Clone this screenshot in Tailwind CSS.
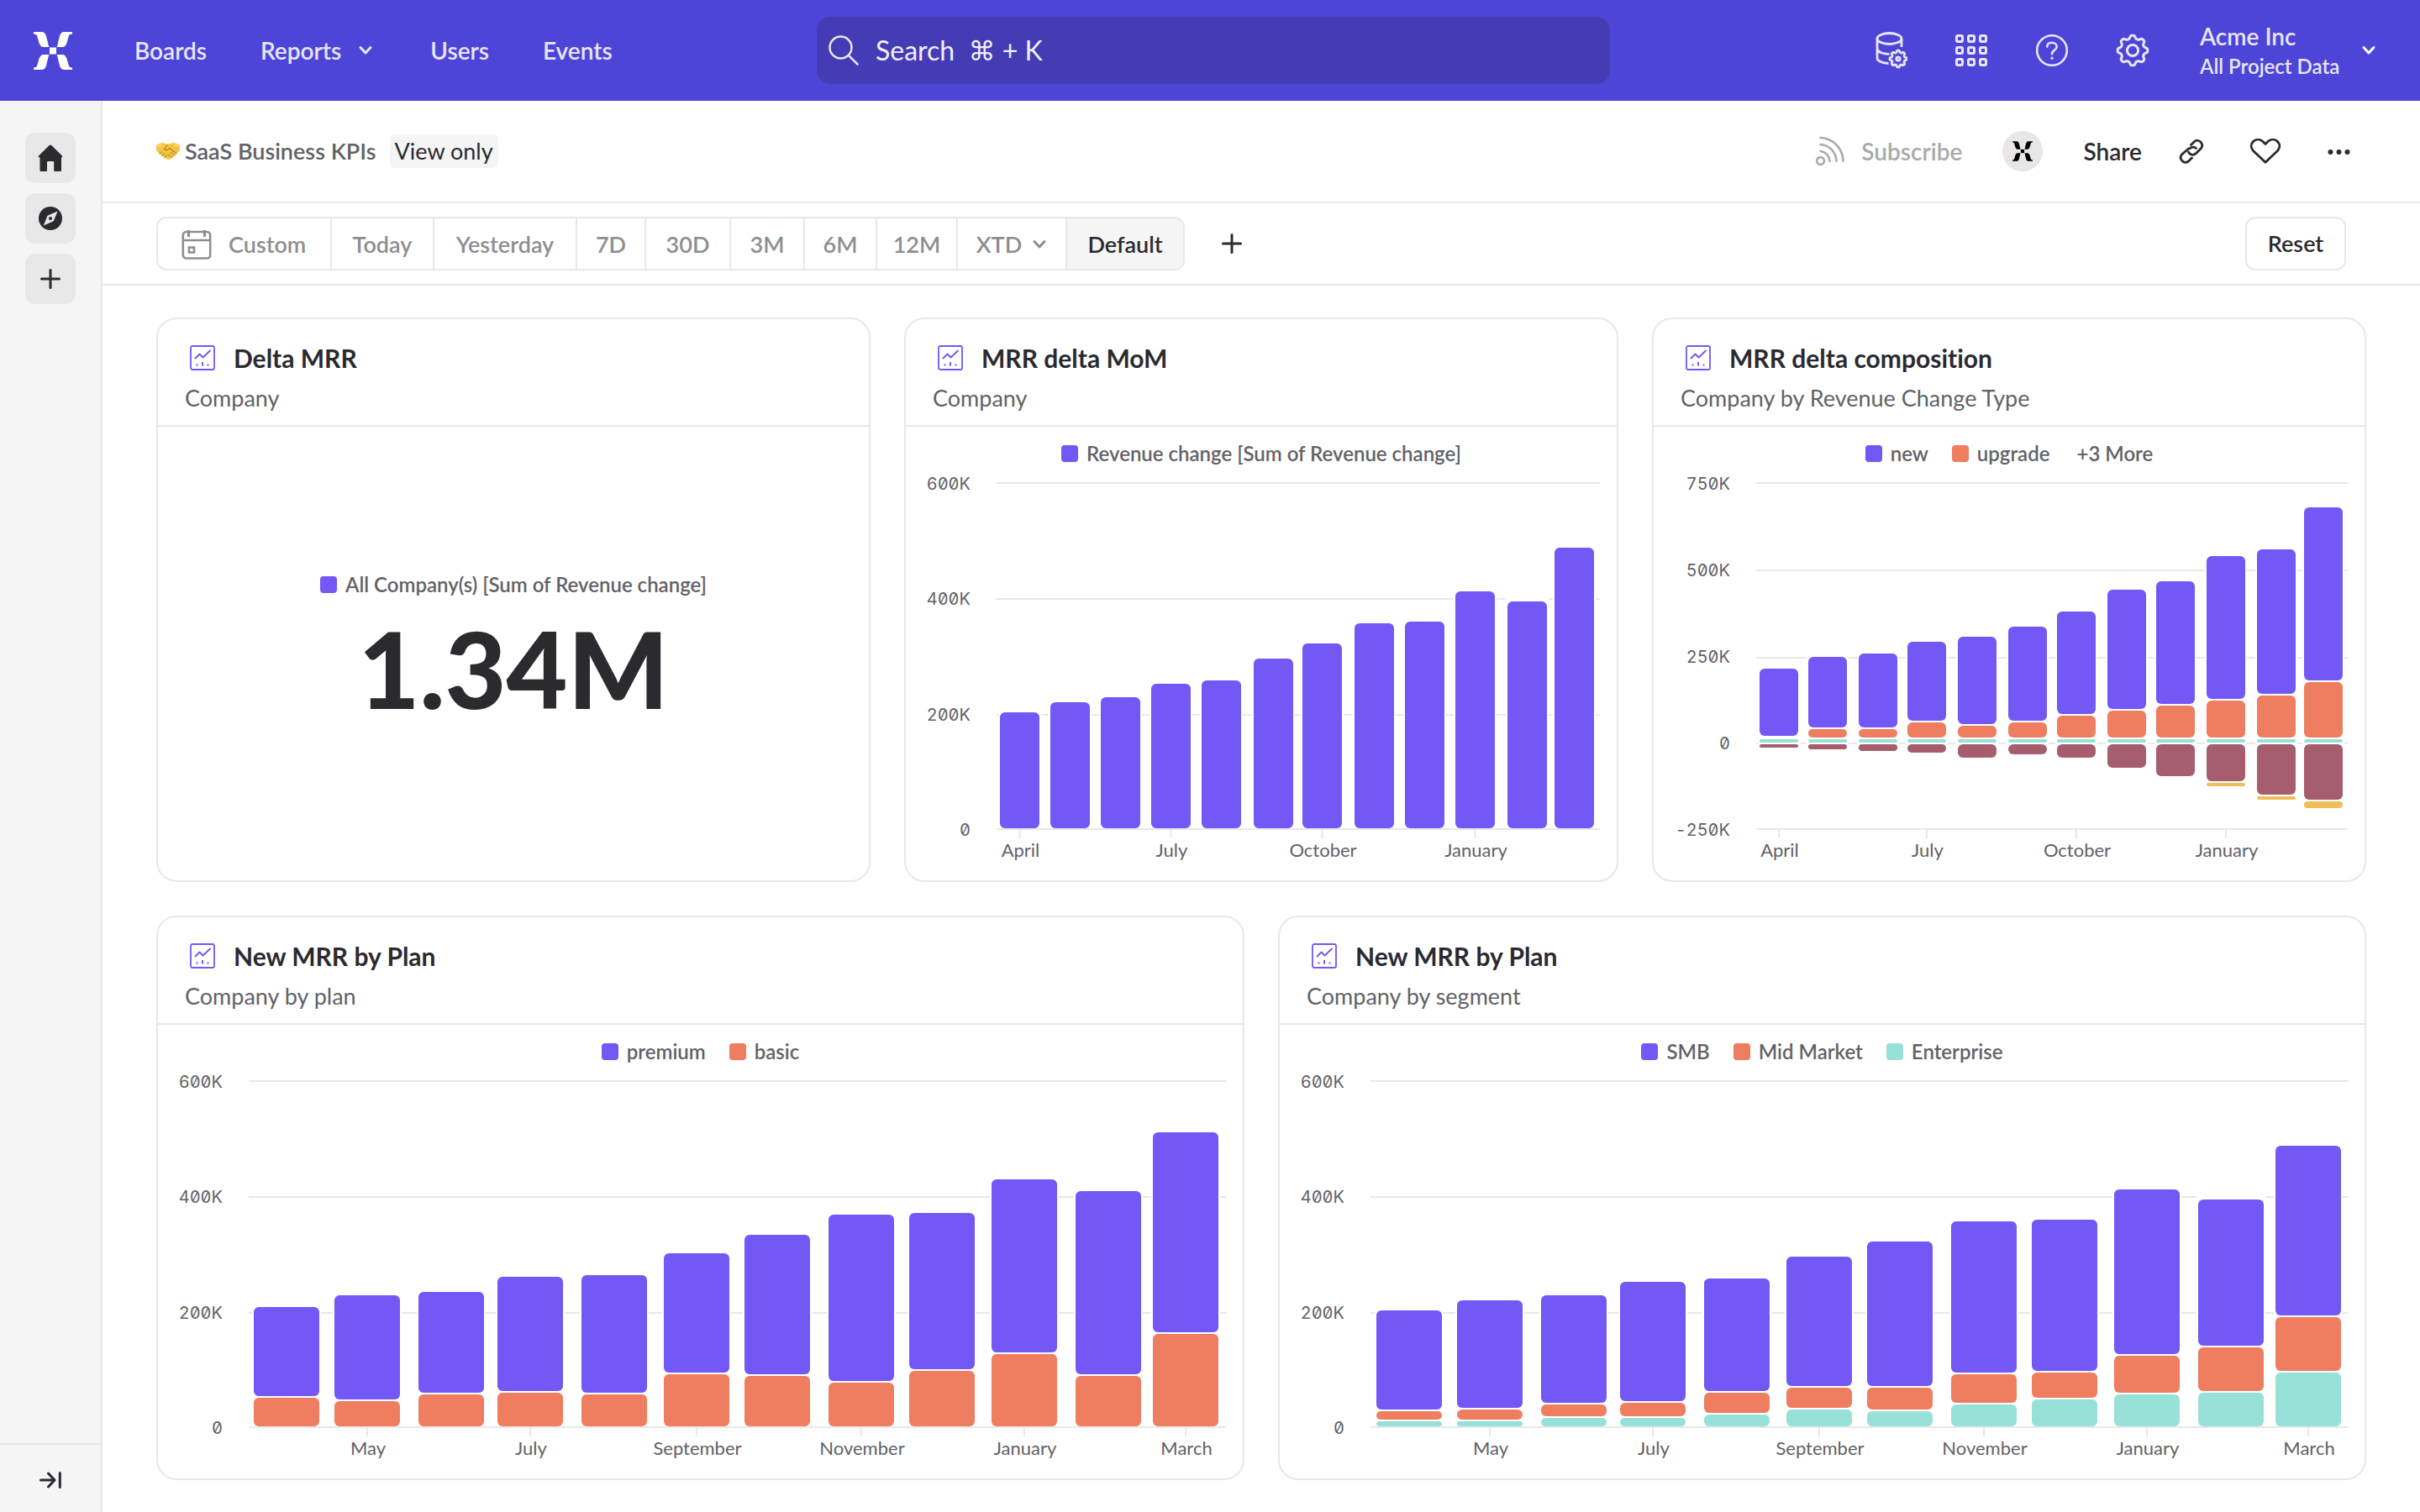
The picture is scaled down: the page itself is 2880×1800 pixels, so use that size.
<!DOCTYPE html>
<html lang="en">
<head>
<meta charset="utf-8">
<title>SaaS Business KPIs</title>
<script src="https://cdn.jsdelivr.net/npm/@tailwindcss/browser@4"></script>
</head>
<body class="flex min-h-screen flex-col bg-white font-['Lato','Open_Sans',sans-serif] text-[27px] leading-9 text-[#2b2a2f] [font-variant-ligatures:none]">

<svg class="hidden" aria-hidden="true">
  <symbol id="logo" viewBox="0 0 46 45">
    <g id="logo-top">
      <path id="logo-arm" d="M0 0H9C12.500 0 14 1.500 15 5L17 13C17.500 15.500 18 17.500 18.500 18H12C9 18 7.500 16 6.500 13L4.500 6C4 3.500 3 2.500 0 2.500Z"/>
      <use href="#logo-arm" transform="translate(46 0) scale(-1 1)"/>
    </g>
    <use href="#logo-top" transform="translate(0 45) scale(1 -1)"/>
    <path d="M19 18.500H27V26.500H19Z"/>
  </symbol>
  <symbol id="chevron" viewBox="0 0 18 12">
    <path d="M3 2.500L9 9L15 2.500" fill="none" stroke="currentColor" stroke-width="3" stroke-linecap="round" stroke-linejoin="round"/>
  </symbol>
  <symbol id="plus" viewBox="0 0 24 24">
    <path d="M12 1.500V22.500M1.500 12H22.500" fill="none" stroke="currentColor" stroke-width="3" stroke-linecap="round"/>
  </symbol>
  <symbol id="report" viewBox="0 0 30 30">
    <rect x="1" y="1" width="28" height="28" rx="2" fill="none" stroke="currentColor" stroke-width="1.800"/>
    <path d="M6.500 15.500L11.500 10.500L15.500 14.500L24 6.500" fill="none" stroke="currentColor" stroke-width="1.900" stroke-linecap="round" stroke-linejoin="round"/>
    <path d="M8.500 22.500V24.500M15 20V24.500M21.500 22.500V24.500" fill="none" stroke="currentColor" stroke-width="2"/>
  </symbol>
</svg>

<header class="flex h-[120px] items-center bg-[#4d45d8] pl-10 pr-8 text-[28px] font-semibold text-[#e8e6f4]">
  <nav class="flex flex-1 items-center">
    <a href="#" aria-label="Home" class="mr-[74px] text-white"><svg class="h-[45px] w-[46px]" fill="currentColor"><use href="#logo"/></svg></a>
    <div class="flex items-center gap-16">
      <a href="#">Boards</a>
      <a href="#" class="flex items-center gap-5 pr-1">Reports <svg class="h-3 w-[18px]"><use href="#chevron"/></svg></a>
      <a href="#">Users</a>
      <a href="#">Events</a>
    </div>
  </nav>
  <label class="flex h-20 w-[944px] items-center gap-5 rounded-2xl bg-[#443cb4] px-3.5">
    <svg class="h-9 w-9" fill="none" stroke="currentColor" stroke-width="2.500" stroke-linecap="round" viewBox="0 0 36 36"><circle cx="14.500" cy="14.500" r="13"/><path d="M24 24L34.500 34.500"/></svg>
    <input type="text" aria-label="Search" placeholder="Search  ⌘ + K" class="flex-1 bg-transparent font-['Lato','DejaVu_Sans',sans-serif] text-[32px] font-normal outline-none placeholder:text-[#f0eff9]">
  </label>
  <div class="flex flex-1 items-center justify-end">
    <div class="flex items-center gap-14">
      <button type="button" aria-label="Data management"><svg class="h-11 w-10" viewBox="-2 0 40 44" fill="none" stroke="currentColor" stroke-width="2.800"><ellipse cx="16.500" cy="8" rx="14.500" ry="6.500"/><path d="M2 8V31C2 34.500 8 37.300 15.500 37.500M31 8V18M2 20.500C3 24 9 26.500 16.500 26.300"/><path data-gear="27 32 10 7.8" stroke-linejoin="round"/><circle cx="27" cy="32" r="2.200"/></svg></button>
      <button type="button" aria-label="Apps"><svg class="h-10 w-10" viewBox="0 0 40 40" fill="none" stroke="currentColor" stroke-width="3"><rect x="2.500" y="2.500" width="7" height="7" rx="1.500"/><rect x="16.500" y="2.500" width="7" height="7" rx="1.500"/><rect x="30.500" y="2.500" width="7" height="7" rx="1.500"/><rect x="2.500" y="16.500" width="7" height="7" rx="1.500"/><rect x="16.500" y="16.500" width="7" height="7" rx="1.500"/><rect x="30.500" y="16.500" width="7" height="7" rx="1.500"/><rect x="2.500" y="30.500" width="7" height="7" rx="1.500"/><rect x="16.500" y="30.500" width="7" height="7" rx="1.500"/><rect x="30.500" y="30.500" width="7" height="7" rx="1.500"/></svg></button>
      <button type="button" aria-label="Help"><svg class="h-10 w-10" viewBox="0 0 40 40" fill="none" stroke="currentColor" stroke-width="2.600" stroke-linecap="round"><circle cx="20" cy="20" r="17.800"/><path d="M14.300 15.500C14.300 12.500 16.700 10.800 20 10.800S25.700 12.800 25.700 15.800C25.700 20 20 19.500 20 24.300"/><circle cx="20" cy="29.200" r="1.600" fill="currentColor" stroke="none"/></svg></button>
      <button type="button" aria-label="Settings"><svg class="h-10 w-10" viewBox="0 0 40 40" fill="none" stroke="currentColor" stroke-width="3"><path data-gear="20 20 17.8 14.2" stroke-linejoin="round"/><circle cx="20" cy="20" r="6.600"/></svg></button>
    </div>
    <button type="button" class="ml-[60px] flex items-center text-left">
      <span class="w-[172px] pt-0.5"><span class="block leading-9">Acme Inc</span><span class="block text-[24px] leading-9">All Project Data</span></span>
      <span class="flex w-[58px] justify-center text-white"><svg class="h-3 w-[18px]"><use href="#chevron"/></svg></span>
    </button>
  </div>
</header>

<div class="flex flex-1">
  <aside class="flex w-[122px] flex-col justify-between border-r-2 border-[#e8e8e8] bg-[#f5f5f5]">
    <div class="flex flex-col items-center gap-3 pt-[38px]">
      <button type="button" aria-label="Home" class="flex h-[60px] w-[60px] items-center justify-center rounded-xl bg-[#e8e8e8]"><svg class="h-8 w-[30px]" viewBox="0 0 30 32" fill="currentColor"><path d="M15 0.500C15.500 0.500 16 0.700 16.500 1.200L28.800 13.200C29.600 14.100 29.200 15.500 28 15.500V30.500C28 31.500 27.500 32 26.500 32H20.500C19.700 32 19.200 31.500 19.200 30.500V21.500C19.200 20.500 18.700 20 18 20H12.500C11.500 20 11 20.500 11 21.500V30.500C11 31.500 10.500 32 9.700 32H4C3 32 2.500 31.500 2.500 30.500V15.500C0.800 15.500 0.400 14.100 1.200 13.200L13.500 1.200C14 0.700 14.500 0.500 15 0.500Z"/></svg></button>
      <button type="button" aria-label="Discover" class="flex h-[60px] w-[60px] items-center justify-center rounded-xl bg-[#e8e8e8]"><svg class="h-7 w-7" viewBox="0 0 28 28"><circle cx="14" cy="14" r="14" fill="currentColor"/><path d="M22.500 5.500L17.800 17.300L5.800 22.500L10.500 10.800Z" fill="#e8e8e8"/><circle cx="14" cy="14" r="2" fill="currentColor"/></svg></button>
      <button type="button" aria-label="Add" class="flex h-[60px] w-[60px] items-center justify-center rounded-xl bg-[#e8e8e8]"><svg class="h-6 w-6"><use href="#plus"/></svg></button>
    </div>
    <button type="button" aria-label="Expand sidebar" class="flex h-[82px] items-center justify-center border-t-2 border-[#e8e8e8]"><svg class="mt-1 h-5 w-[26px]" viewBox="0 0 26 20" fill="none" stroke="currentColor" stroke-width="3" stroke-linecap="round" stroke-linejoin="round"><path d="M1.500 10H18M10.500 2L18 10L10.500 18M24.300 1.500V18.500"/></svg></button>
  </aside>

  <main class="min-w-0 flex-1">
    <div class="flex h-[122px] items-center justify-between border-b-2 border-[#e8e8e8] pl-16 pr-[81px]">
      <div class="flex items-center">
        <svg class="mr-1.5 h-5 w-7" viewBox="0 0 28 20" role="img" aria-label="Handshake"><path d="M1 2.500L7 0.500L13.500 2L21 0.500L27 2.500L28 8L24.500 12.500L17 19L13.500 19.500L3.500 12.500L0 8Z" fill="#f5c443" stroke="#f5c443" stroke-linejoin="round"/><path d="M13.500 2.500L9.500 7.500C11.500 9.500 14 8.500 16 6.800L24 12.500" fill="none" stroke="#b8801c" stroke-width="1.200"/><path d="M4 13L6.500 11M7 15.500L9.500 13M10 17.500L12.500 15M14 14L19.500 17M17.500 11.500L22 14.500" stroke="#c9922a" stroke-width="1.200" stroke-linecap="round"/><path d="M2 4L7 2.500M21.500 2.500L26 4" stroke="#fbe08a" stroke-width="1.500"/></svg>
        <h1 class="font-semibold text-[#626266]">SaaS Business KPIs</h1>
        <span class="ml-4 rounded-md bg-[#f5f5f5] px-1.5 leading-10">View only</span>
      </div>
      <div class="flex items-center text-[28px] font-semibold">
        <button type="button" class="flex items-center gap-5 text-[#aaaaac]"><svg class="h-9 w-[34px]" viewBox="0 0 34 36" fill="none" stroke="currentColor" stroke-width="2.600" stroke-linecap="round"><circle cx="5.500" cy="29.500" r="4.400"/><path d="M5.500 2C20 2.500 32 14 32.500 29.800M5.500 10C15.500 10.500 24 18.500 24.500 29.800M5.500 18C11.500 18.500 16 23.500 16.500 29.800"/></svg>Subscribe</button>
        <span class="ml-12 flex h-12 w-12 items-center justify-center rounded-full bg-[#e8e6e7] text-black"><svg class="h-6 w-6" fill="currentColor"><use href="#logo"/></svg></span>
        <button type="button" class="ml-12">Share</button>
        <button type="button" aria-label="Copy link" class="ml-11"><svg class="h-[30px] w-[30px]" viewBox="0 0 30 30" fill="none" stroke="currentColor" stroke-width="2.800" stroke-linecap="round"><path d="M12.500 12C15 9.500 19 9.500 20.500 11.500M14.500 7.500L18.500 3.500C23.500 -0.500 30.500 6 26.500 11.500L20.500 17.500C17.500 20.500 13 19.500 11.500 16"/><path d="M11.500 12L3.500 19C-0.500 24.500 6 31 11.500 27L15.500 23"/></svg></button>
        <button type="button" aria-label="Favorite" class="ml-[54px]"><svg class="h-[30px] w-[38px]" viewBox="0 0 38 30" fill="none" stroke="currentColor" stroke-width="2.800" stroke-linejoin="round"><path d="M19 28.200L4.500 14.500C-2.500 6.500 8 -3.500 16 3.500L19 6.500L22 3.500C30 -3.500 40.500 6.500 33.500 14.500Z"/></svg></button>
        <button type="button" aria-label="More" class="ml-[54px]"><svg class="h-8 w-[30px]" viewBox="0 0 30 32" fill="currentColor"><circle cx="4.500" cy="17" r="3"/><circle cx="14.500" cy="17" r="3"/><circle cx="24.500" cy="17" r="3"/></svg></button>
      </div>
    </div>

    <div class="flex h-[98px] items-center justify-between border-b-2 border-[#e8e8e8] pl-16 pr-[88px] font-semibold">
      <div class="flex items-center gap-11">
        <div class="flex h-16 divide-x-2 divide-[#e8e8e8] overflow-hidden rounded-xl border-2 border-[#e8e8e8] text-[#8e8e90] [&>button]:pt-0.5">
          <button type="button" class="flex w-[207px] items-center gap-5 pl-7"><svg class="h-9 w-9" viewBox="0 0 36 36" fill="none" stroke="currentColor" stroke-width="2.600"><rect x="1.800" y="3" width="32.400" height="31.500" rx="4"/><path d="M2 13H34"/><path d="M8.500 1V9M27.500 1V9" stroke-width="3"/><path d="M9 21.500H15V27.500H9Z"/></svg>Custom</button>
          <button type="button" class="w-[122px]">Today</button>
          <button type="button" class="w-[170px]">Yesterday</button>
          <button type="button" class="w-[82px]">7D</button>
          <button type="button" class="w-[101px]">30D</button>
          <button type="button" class="w-[88px]">3M</button>
          <button type="button" class="w-[86px]">6M</button>
          <button type="button" class="w-[96px]">12M</button>
          <button type="button" class="flex w-[130px] items-center justify-center gap-3">XTD <svg class="h-3 w-[18px]"><use href="#chevron"/></svg></button>
          <button type="button" class="w-[138px] bg-[#f5f5f5] text-[#2b2a2f]">Default</button>
        </div>
        <button type="button" aria-label="Add filter"><svg class="h-6 w-6"><use href="#plus"/></svg></button>
      </div>
      <button type="button" class="h-16 w-[120px] rounded-xl border-2 border-[#e8e8e8]">Reset</button>
    </div>

    <div class="grid grid-cols-6 gap-10 px-16 py-[38px]">
      <section class="col-span-2 h-[672px] rounded-3xl border-2 border-[#e8e8e8]">
        <div class="h-[128px] border-b-2 border-[#e8e8e8] px-8 pt-[26px]">
          <h2 class="flex items-center gap-[22px] pl-1.5 text-[30px] leading-10 font-bold"><svg class="h-[30px] w-[30px] text-[#7358f6]"><use href="#report"/></svg>Delta MRR</h2>
          <p class="mt-2.5 text-[#626266]">Company</p>
        </div>
        <div class="flex h-[540px] flex-col items-center justify-center gap-6 pb-5">
          <p class="flex items-center gap-2.5 text-[24px] leading-8 font-semibold text-[#626266]"><span class="h-5 w-5 rounded-sm bg-[#7358f6]"></span>All Company(s) [Sum of Revenue change]</p>
          <p class="text-[126px] leading-[120px] font-black">1.34M</p>
        </div>
      </section>

      <section class="col-span-2 h-[672px] rounded-3xl border-2 border-[#e8e8e8]">
        <div class="h-[128px] border-b-2 border-[#e8e8e8] px-8 pt-[26px]">
          <h2 class="flex items-center gap-[22px] pl-1.5 text-[30px] leading-10 font-bold"><svg class="h-[30px] w-[30px] text-[#7358f6]"><use href="#report"/></svg>MRR delta MoM</h2>
          <p class="mt-2.5 text-[#626266]">Company</p>
        </div>
        <div class="flex justify-center gap-7 pt-4 text-[24px] leading-8 font-semibold text-[#626266]">
          <span class="flex items-center gap-2.5"><span class="h-5 w-5 rounded-sm bg-[#7358f6]"></span>Revenue change [Sum of Revenue change]</span>
        </div>
        <div class="flex pr-5">
          <div class="mt-1 flex h-[444px] w-[108px] flex-col justify-between pr-[31px] text-right font-['Inter',sans-serif] text-[20px] leading-8 text-[#626266] tabular-nums slashed-zero"><span>600K</span><span>400K</span><span>200K</span><span>0</span></div>
          <svg data-chart="delta" class="h-[492px] flex-1 fill-[#626266] text-[22px]" role="img" aria-label="Revenue change by month"></svg>
        </div>
      </section>

      <section class="col-span-2 h-[672px] rounded-3xl border-2 border-[#e8e8e8]">
        <div class="h-[128px] border-b-2 border-[#e8e8e8] px-8 pt-[26px]">
          <h2 class="flex items-center gap-[22px] pl-1.5 text-[30px] leading-10 font-bold"><svg class="h-[30px] w-[30px] text-[#7358f6]"><use href="#report"/></svg>MRR delta composition</h2>
          <p class="mt-2.5 text-[#626266]">Company by Revenue Change Type</p>
        </div>
        <div class="flex justify-center gap-7 pt-4 text-[24px] leading-8 font-semibold text-[#626266]">
          <span class="flex items-center gap-2.5"><span class="h-5 w-5 rounded-sm bg-[#7358f6]"></span>new</span>
          <span class="flex items-center gap-2.5"><span class="h-5 w-5 rounded-sm bg-[#ee7e5f]"></span>upgrade</span>
          <span class="pl-1">+3 More</span>
        </div>
        <div class="flex pr-5">
          <div class="mt-1 flex h-[444px] w-[122px] flex-col justify-between pr-[31px] text-right font-['Inter',sans-serif] text-[20px] leading-8 text-[#626266] tabular-nums slashed-zero"><span>750K</span><span>500K</span><span>250K</span><span>0</span><span>-250K</span></div>
          <svg data-chart="composition" class="h-[492px] flex-1 fill-[#626266] text-[22px]" role="img" aria-label="Revenue change by type and month"></svg>
        </div>
      </section>

      <section class="col-span-3 h-[672px] rounded-3xl border-2 border-[#e8e8e8]">
        <div class="h-[128px] border-b-2 border-[#e8e8e8] px-8 pt-[26px]">
          <h2 class="flex items-center gap-[22px] pl-1.5 text-[30px] leading-10 font-bold"><svg class="h-[30px] w-[30px] text-[#7358f6]"><use href="#report"/></svg>New MRR by Plan</h2>
          <p class="mt-2.5 text-[#626266]">Company by plan</p>
        </div>
        <div class="flex justify-center gap-7 pt-4 text-[24px] leading-8 font-semibold text-[#626266]">
          <span class="flex items-center gap-2.5"><span class="h-5 w-5 rounded-sm bg-[#7358f6]"></span>premium</span>
          <span class="flex items-center gap-2.5"><span class="h-5 w-5 rounded-sm bg-[#ee7e5f]"></span>basic</span>
        </div>
        <div class="flex pr-5">
          <div class="mt-1 flex h-[444px] w-[108px] flex-col justify-between pr-[31px] text-right font-['Inter',sans-serif] text-[20px] leading-8 text-[#626266] tabular-nums slashed-zero"><span>600K</span><span>400K</span><span>200K</span><span>0</span></div>
          <svg data-chart="plan" class="h-[492px] flex-1 fill-[#626266] text-[22px]" role="img" aria-label="New MRR by plan and month"></svg>
        </div>
      </section>

      <section class="col-span-3 h-[672px] rounded-3xl border-2 border-[#e8e8e8]">
        <div class="h-[128px] border-b-2 border-[#e8e8e8] px-8 pt-[26px]">
          <h2 class="flex items-center gap-[22px] pl-1.5 text-[30px] leading-10 font-bold"><svg class="h-[30px] w-[30px] text-[#7358f6]"><use href="#report"/></svg>New MRR by Plan</h2>
          <p class="mt-2.5 text-[#626266]">Company by segment</p>
        </div>
        <div class="flex justify-center gap-7 pt-4 text-[24px] leading-8 font-semibold text-[#626266]">
          <span class="flex items-center gap-2.5"><span class="h-5 w-5 rounded-sm bg-[#7358f6]"></span>SMB</span>
          <span class="flex items-center gap-2.5"><span class="h-5 w-5 rounded-sm bg-[#ee7e5f]"></span>Mid Market</span>
          <span class="flex items-center gap-2.5"><span class="h-5 w-5 rounded-sm bg-[#98e1d9]"></span>Enterprise</span>
        </div>
        <div class="flex pr-5">
          <div class="mt-1 flex h-[444px] w-[108px] flex-col justify-between pr-[31px] text-right font-['Inter',sans-serif] text-[20px] leading-8 text-[#626266] tabular-nums slashed-zero"><span>600K</span><span>400K</span><span>200K</span><span>0</span></div>
          <svg data-chart="segment" class="h-[492px] flex-1 fill-[#626266] text-[22px]" role="img" aria-label="New MRR by segment and month"></svg>
        </div>
      </section>
    </div>
  </main>
</div>

<script>
const PURPLE = '#7358f6', ORANGE = '#ee7e5f', TEAL = '#98e1d9', PLUM = '#a65e6e', YELLOW = '#efbe57', GRID = '#e8e8e8';

// Each bar is a list of [colour, top, bottom] segments, measured down from the top of the plot.
const stack = (colours, columns) => columns[0].map((_, i) => {
  const edges = columns.map(c => c[i]);
  return colours.map((c, k) => [c, edges[k] + (k ? 2 : 0), k + 1 < edges.length ? edges[k + 1] : 430]);
});

const tops = [292, 280, 274, 258, 254, 228, 210, 186, 184, 148, 160, 96];
const newTop = [240, 226, 222, 208, 202, 190, 172, 146, 136, 106, 98, 48];
const newEnd = [320, 310, 310, 302, 306, 302, 294, 288, 282, 276, 270, 254];
const plumEnd = [334, 336, 338, 340, 346, 342, 346, 358, 368, 374, 390, 396];
const yellow = { 9: [376, 380], 10: [392, 396], 11: [398, 406] };

const wideX = [6, 102, 202, 296, 396, 494, 590, 690, 786, 884, 984, 1076];
const everyThird = { 0: 'April', 3: 'July', 6: 'October', 9: 'January' };
const everySecond = { 1: 'May', 3: 'July', 5: 'September', 7: 'November', 9: 'January', 11: 'March' };

const charts = {
  delta: {
    width: 718, bar: 47, x: [4, 64, 124, 184, 244, 306, 364, 426, 486, 546, 608, 664],
    lines: [18, 156, 294], labels: everyThird, bars: tops.map(t => [[PURPLE, t, 430]])
  },
  composition: {
    width: 704, bar: 46, x: [4, 62, 122, 180, 240, 300, 358, 418, 476, 536, 596, 652],
    lines: [18, 122, 226, 328], labels: everyThird,
    bars: newTop.map((t, i) => {
      const s = [[PURPLE, t, newEnd[i]], [TEAL, 324, 328], [PLUM, 330, plumEnd[i]]];
      if (i) s.push([ORANGE, newEnd[i] + 2, 322]);
      if (yellow[i]) s.push([YELLOW, ...yellow[i]]);
      return s;
    })
  },
  plan: {
    width: 1163, bar: 78, x: wideX, lines: [18, 156, 294], labels: everySecond,
    bars: stack([PURPLE, ORANGE], [
      [288, 274, 270, 252, 250, 224, 202, 178, 176, 136, 150, 80],
      [394, 398, 390, 388, 390, 366, 368, 376, 362, 342, 368, 318]])
  },
  segment: {
    width: 1163, bar: 78, x: wideX.map(x => x + 1), lines: [18, 156, 294], labels: everySecond,
    bars: stack([PURPLE, ORANGE, TEAL], [
      tops,
      [410, 408, 402, 400, 388, 382, 382, 366, 364, 344, 334, 298],
      [422, 422, 418, 418, 414, 408, 410, 402, 396, 390, 388, 364]])
  }
};

for (const svg of document.querySelectorAll('[data-chart]')) {
  const c = charts[svg.dataset.chart];
  const pct = v => (v / c.width * 100).toFixed(3) + '%';
  const rect = (x, y, w, h, fill, rx = 0) => `<rect x="${x}" y="${y}" width="${w}" height="${h}" rx="${rx}" fill="${fill}"/>`;
  let out = c.lines.map(y => rect(0, y, '100%', 2, GRID)).join('');
  c.bars.forEach((bar, i) => {
    const x = pct(c.x[i]), w = pct(c.bar);
    const y0 = Math.min(...bar.map(s => s[1])) - 2, y1 = Math.max(...bar.map(s => s[2]));
    out += `<rect x="${x}" y="${y0}" width="${w}" height="${y1 - y0}" fill="#fff" stroke="#fff" stroke-width="4"/>`;
    for (const [fill, top, end] of bar) out += rect(x, top, w, end - top, fill, Math.min(6, (end - top) / 2));
  });
  out += rect(0, 430, '100%', 2, GRID);
  for (const i in c.labels) {
    const mid = c.x[i] + c.bar / 2;
    out += rect(pct(mid - 1), 432, 2, 10, GRID) + `<text x="${pct(mid + 1)}" y="464" text-anchor="middle">${c.labels[i]}</text>`;
  }
  svg.innerHTML = out;
}

// Eight-lobed cog outlines: centre x, centre y, outer radius, inner radius.
for (const path of document.querySelectorAll('[data-gear]')) {
  const [cx, cy, R, r] = path.dataset.gear.split(' ').map(Number);
  const pts = [];
  for (let k = 0; k < 160; k++) {
    const a = k / 160 * 2 * Math.PI, wave = Math.tanh(1.8 * Math.cos(8 * a)) / Math.tanh(1.8);
    const d = (R + r) / 2 + (R - r) / 2 * wave;
    pts.push((cx + d * Math.cos(a)).toFixed(2) + ' ' + (cy + d * Math.sin(a)).toFixed(2));
  }
  path.setAttribute('d', 'M' + pts.join('L') + 'Z');
}
</script>
</body>
</html>
